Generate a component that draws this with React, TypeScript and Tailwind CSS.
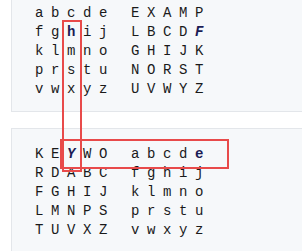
import React from "react"

const mark = "font-bold text-[#1b1b55]"

const Panel = ({ rows, className }: { rows: React.ReactNode[]; className: string }) => (
  <pre
    className={`w-[300px] bg-[#f6f8fa] border border-[#e3e6ea] pl-[23px] font-['Liberation_Mono',monospace] text-[14px] tracking-[-0.4px] leading-[19px] text-[#1a1a1a] ${className}`}
  >
    {rows.map((r, i) => (
      <div key={i}>{r}</div>
    ))}
  </pre>
)

export default function App() {
  const top = [
    "a b c d e   E X A M P",
    <>f g <b className={mark}>h</b> i j   L B C D <b className={`${mark} italic`}>F</b></>,
    "k l m n o   G H I J K",
    "p r s t u   N O R S T",
    "v w x y z   U V W Y Z",
  ]
  const bottom = [
    <>K E <b className={`${mark} italic`}>Y</b> W O   a b c d <b className={mark}>e</b></>,
    "R D A B C   f g h i j",
    "F G H I J   k l m n o",
    "L M N P S   p r s t u",
    "T U V X Z   v w x y z",
  ]
  return (
    <div className="relative w-[302px] h-[251px] overflow-hidden bg-white">
      <div className="ml-[11px] flex flex-col gap-[16px]">
        <Panel rows={top} className="border-t-0 pt-[4px] pb-[12px]" />
        <Panel rows={bottom} className="pt-[16px] pb-[12px]" />
      </div>
      {/* highlight boxes */}
      <div className="absolute left-[62px] top-[20px] w-[20px] h-[152px] border-2 border-[#e84a4a]" />
      <div className="absolute left-[60px] top-[139px] w-[169px] h-[30px] border-2 border-[#e84a4a]" />
    </div>
  )
}
